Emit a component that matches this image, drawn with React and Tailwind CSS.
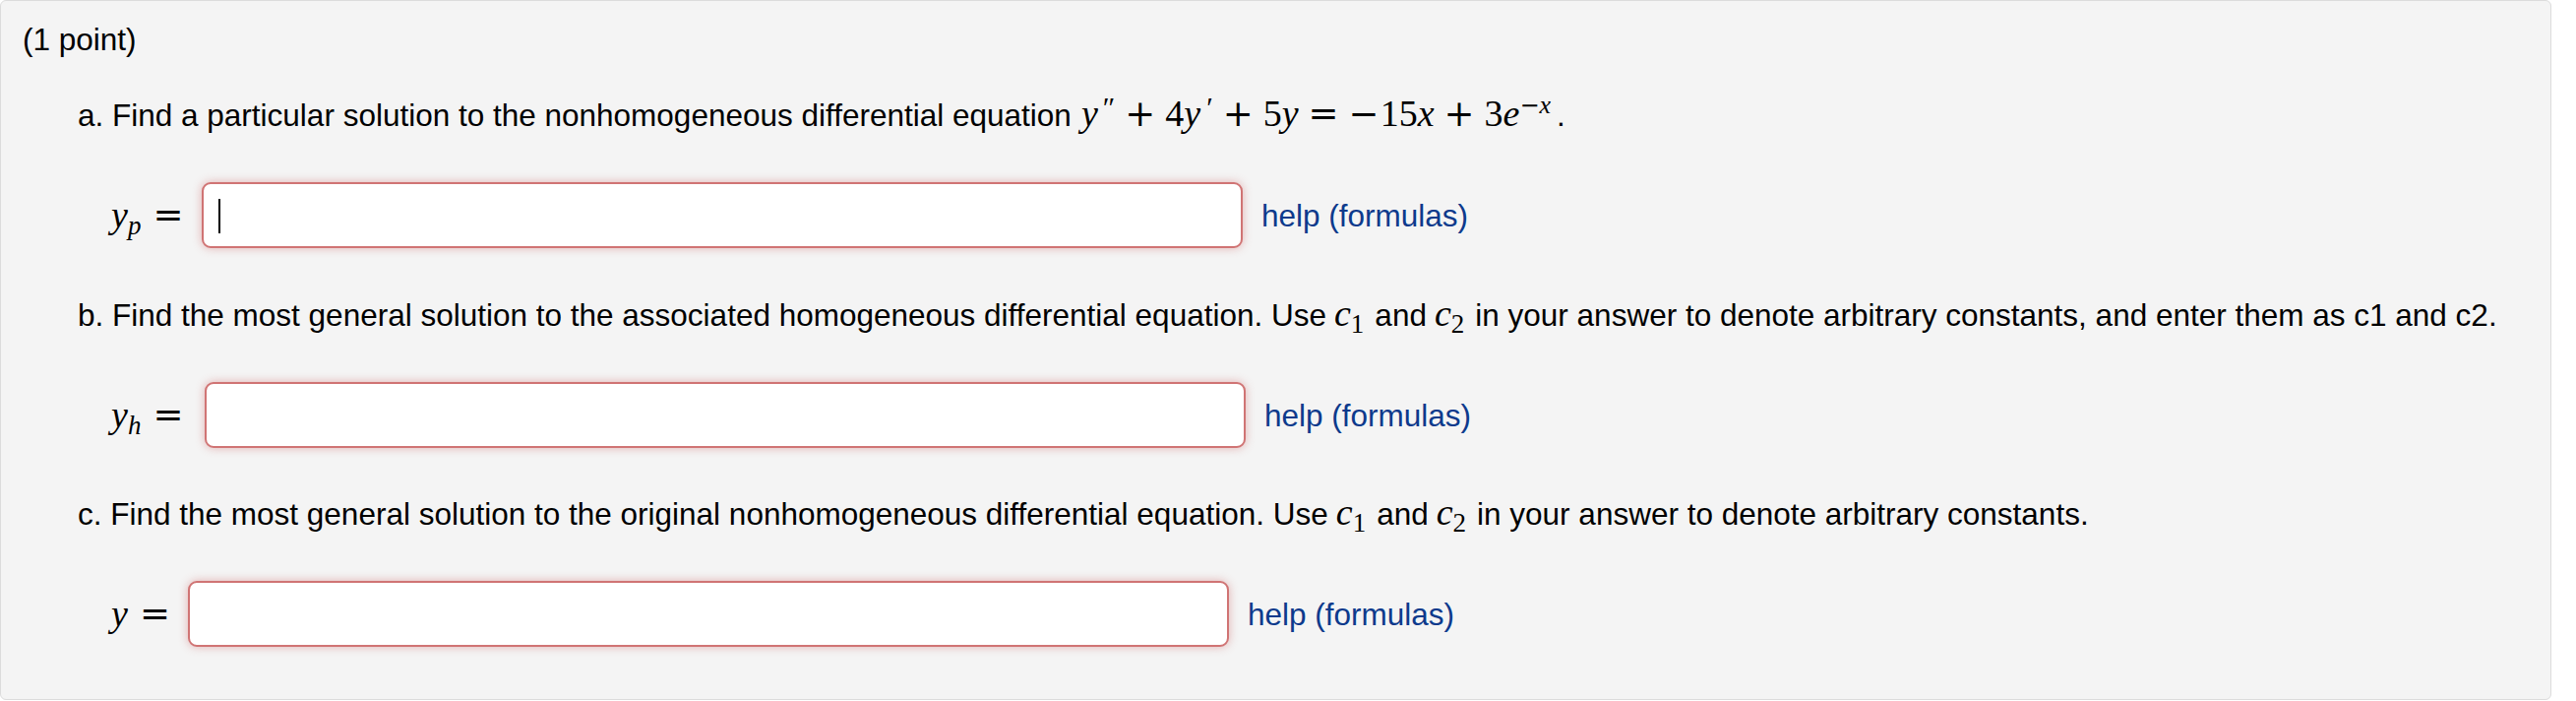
import React from "react";

const SERIF = "font-['Liberation_Serif','Times_New_Roman',serif]";
const OPF = "font-['DejaVu_Serif',serif]";

function Op({ children, cls = "" }) {
  return (
    <span className={`${OPF} not-italic font-light text-[37px] ${cls}`}>
      {children}
    </span>
  );
}

function Prime({ children, cls = "" }) {
  return (
    <span className={`relative top-[-9px] text-[30px] ${cls}`}>{children}</span>
  );
}

function C({ n }) {
  return (
    <span className={`${SERIF} text-[38px] ml-[8px] mr-[11px]`}>
      <i>c</i>
      <sub className="text-[27px]">{n}</sub>
    </span>
  );
}

function AnswerRow({ label, labelW, caret, mt }) {
  return (
    <div className={`flex items-center ml-[90px] ${mt}`}>
      <div className={`${labelW} flex items-center`}>{label}</div>
      <div className="relative w-[1058px] h-[67px] bg-white border-2 border-[#d07474] rounded-[9px] shadow-[0_0_10px_rgba(205,95,95,0.45)]">
        {caret && (
          <div className="absolute left-[15px] top-[15px] w-[2px] h-[35px] bg-black" />
        )}
      </div>
      <span className="ml-[19px] text-[#0d3a8c] whitespace-nowrap">
        help (formulas)
      </span>
    </div>
  );
}

export default function App() {
  return (
    <div className="bg-white w-[2618px] h-[712px]">
      <div className="w-[2593px] h-[711px] bg-[#f4f4f4] border border-[#dcdcdc] rounded-[6px] pl-[22px] pt-[21px] text-[31.5px] leading-[36px] text-black font-['Liberation_Sans',Arial,sans-serif]">
        <div className="h-[36px] whitespace-nowrap">(1 point)</div>

        <div className="mt-[39px] ml-[56px] h-[36px] whitespace-nowrap flex items-baseline">
          <span>
            a. Find a particular solution to the nonhomogeneous differential
            equation
          </span>
          <span className={`${SERIF} text-[38px] ml-[10px] whitespace-nowrap`}>
            <i>y</i>
            <Prime cls="ml-[5px]">″</Prime>
            <Op cls="mx-[10px]">+</Op>
            4<i>y</i>
            <Prime cls="ml-[6px]">′</Prime>
            <Op cls="mx-[10px]">+</Op>
            5<i>y</i>
            <Op cls="mx-[10px]">=</Op>
            <Op cls="mr-[1px]">−</Op>
            15<i>x</i>
            <Op cls="mx-[10px]">+</Op>
            3<i>e</i>
            <sup className="text-[26px]">
              <span className={`${OPF} text-[24px]`}>−</span>
              <i>x</i>
            </sup>
          </span>
          <span className="ml-[6px]">.</span>
        </div>

        <AnswerRow
          mt="mt-[52px]"
          labelW="w-[92px]"
          caret
          label={
            <span className={`${SERIF} text-[38px] whitespace-nowrap`}>
              <i>y</i>
              <sub className="text-[27px]">
                <i>p</i>
              </sub>
              <Op cls="ml-[12px]">=</Op>
            </span>
          }
        />

        <div className="mt-[48px] ml-[56px] h-[36px] whitespace-nowrap flex items-baseline">
          <span>
            b. Find the most general solution to the associated homogeneous
            differential equation. Use
          </span>
          <C n="1" />
          <span>and</span>
          <C n="2" />
          <span>
            in your answer to denote arbitrary constants, and enter them as c1
            and c2.
          </span>
        </div>

        <AnswerRow
          mt="mt-[52px]"
          labelW="w-[95px]"
          label={
            <span className={`${SERIF} text-[38px] whitespace-nowrap`}>
              <i>y</i>
              <sub className="text-[27px]">
                <i>h</i>
              </sub>
              <Op cls="ml-[12px]">=</Op>
            </span>
          }
        />

        <div className="mt-[47px] ml-[56px] h-[36px] whitespace-nowrap flex items-baseline">
          <span>
            c. Find the most general solution to the original nonhomogeneous
            differential equation. Use
          </span>
          <C n="1" />
          <span>and</span>
          <C n="2" />
          <span>in your answer to denote arbitrary constants.</span>
        </div>

        <AnswerRow
          mt="mt-[52px]"
          labelW="w-[78px]"
          label={
            <span className={`${SERIF} text-[38px] whitespace-nowrap`}>
              <i>y</i>
              <Op cls="ml-[12px]">=</Op>
            </span>
          }
        />
      </div>
    </div>
  );
}
